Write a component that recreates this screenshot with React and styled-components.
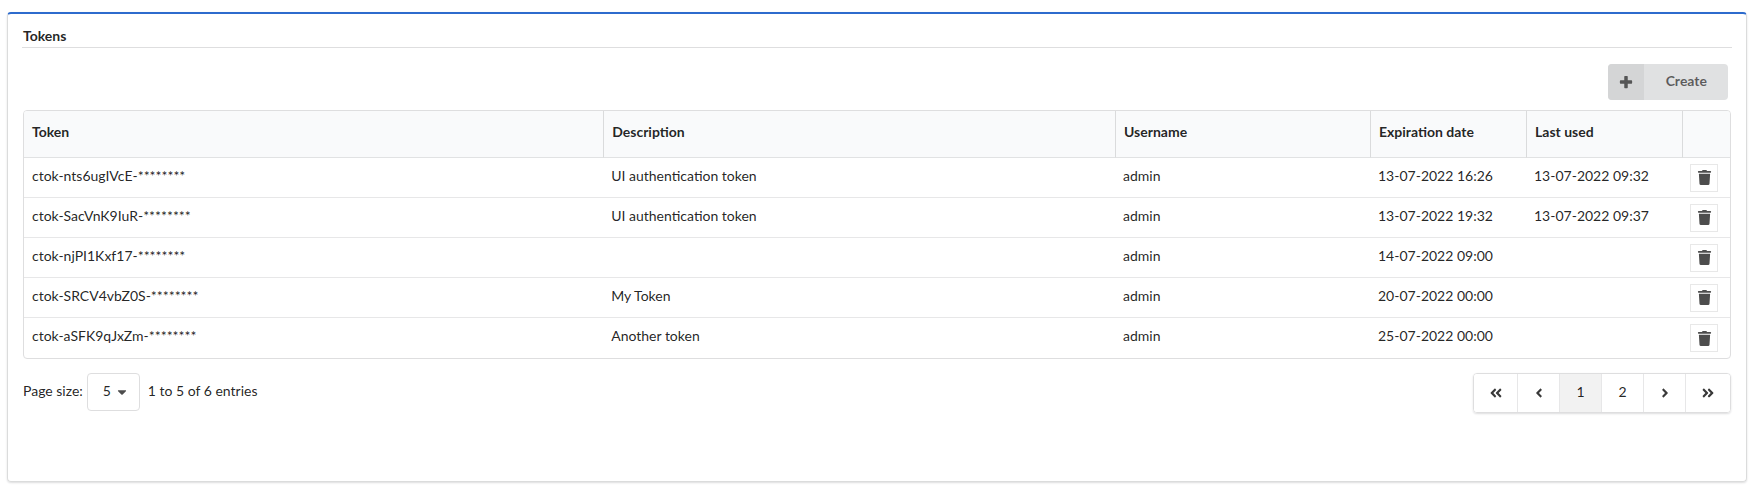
import React, { useState } from "react";
import styled, { createGlobalStyle } from "styled-components";
import {
  FaAngleDoubleLeft,
  FaAngleDoubleRight,
  FaAngleLeft,
  FaAngleRight,
  FaCaretDown,
  FaTrash,
} from "react-icons/fa";

const GlobalStyle = createGlobalStyle`
  *, *::before, *::after { box-sizing: border-box; }
  body {
    margin: 0;
    background: #fff;
    color: rgba(0, 0, 0, 0.87);
    font-family: Lato, "Liberation Sans", sans-serif;
    font-size: 14px;
    line-height: 20px;
  }
  button, select { font: inherit; color: inherit; }
`;

const Panel = styled.main`
  margin: 12px 7px 16px;
  padding: 12px 14px 68px;
  border: 1px solid #dbdcdc;
  border-top: 2px solid #2d6bcd;
  border-radius: 4px;
  box-shadow: 0 1px 2px 0 rgba(34, 36, 38, 0.15);
`;

const Title = styled.h1`
  margin: 0;
  padding: 0 0 1px 1px;
  border-bottom: 1px solid #dededf;
  font-size: 14px;
  line-height: 20px;
  font-weight: 700;
`;

const Content = styled.div`
  padding: 16px 1px 0;
`;

const Toolbar = styled.div`
  display: flex;
  justify-content: flex-end;
  padding: 0 3px 10px;
`;

const CreateButton = styled.button`
  display: flex;
  align-items: center;
  height: 36px;
  padding: 0;
  overflow: hidden;
  border: 0;
  border-radius: 4px;
  background: #e0e1e2;
  color: rgba(0, 0, 0, 0.6);
  font-weight: 700;
  cursor: pointer;
`;

const ButtonIcon = styled.span`
  display: flex;
  align-items: center;
  justify-content: center;
  width: 36px;
  height: 36px;
  background: #d4d5d6;
`;

const ButtonLabel = styled.span`
  padding: 0 21px 2px 22px;
`;

const TokenTable = styled.table`
  width: 100%;
  table-layout: fixed;
  border: 1px solid #dededf;
  border-radius: 4px;
  border-collapse: separate;
  border-spacing: 0;
  overflow: hidden;
`;

const Column = styled.col`
  width: ${({ $width }) => $width};
`;

const HeaderCell = styled.th`
  height: 47px;
  padding: 0 8px 4px;
  border-bottom: 1px solid #e1e2e3;
  background: #f9fafb;
  text-align: left;
  font-weight: 700;

  & + & { border-left: 1px solid #dadbdc; }
`;

const Cell = styled.td`
  height: 40px;
  padding: 0 8px 4px;
  border-bottom: 1px solid #e7e7e8;

  tr:last-child > & { border-bottom: 0; }
`;

const ActionCell = styled(Cell)`
  padding: 0 8px;
`;

const DeleteButton = styled.button`
  display: flex;
  align-items: center;
  justify-content: center;
  width: 28px;
  height: 28px;
  padding: 0;
  border: 1px solid #e8e8e8;
  background: #fff;
  color: #4d4d4d;
  cursor: pointer;
`;

const Footer = styled.footer`
  display: flex;
  align-items: flex-start;
  justify-content: space-between;
  padding-top: 14px;
`;

const PageInfo = styled.div`
  display: flex;
  align-items: center;
`;

const PageSizeLabel = styled.label`
  padding-bottom: 2px;
`;

const SelectBox = styled.span`
  display: grid;
  align-items: center;
  margin: 0 8px 0 4px;

  & > * { grid-area: 1 / 1; }

  & > svg {
    justify-self: end;
    margin-right: 11px;
    pointer-events: none;
    color: #4d4d4d;
  }
`;

const PageSizeSelect = styled.select`
  width: 53px;
  height: 38px;
  padding: 0 16px 2px 15px;
  border: 1px solid #dededf;
  border-radius: 4px;
  background: #fff;
  appearance: none;
`;

const Entries = styled.span`
  padding-bottom: 2px;
`;

const Pagination = styled.nav`
  display: flex;
  overflow: hidden;
  border: 1px solid #dededf;
  border-radius: 4px;
  box-shadow: 0 1px 2px 0 rgba(34, 36, 38, 0.15);
`;

const PageButton = styled.button`
  display: flex;
  align-items: center;
  justify-content: center;
  width: ${({ $wide }) => ($wide ? 44 : 42)}px;
  height: 38px;
  padding: 0 0 2px;
  border: 0;
  border-right: 1px solid #e7e7e8;
  background: ${({ $active }) => ($active ? "#f2f2f2" : "#fff")};
  cursor: pointer;

  &:last-child { border-right: 0; }
`;

const ArrowButton = styled(PageButton)`
  padding: 0;
  color: #3a3a3a;
`;

const PlusIcon = () => (
  <svg width="14" height="14" viewBox="0 0 448 512" fill="currentColor" aria-hidden="true">
    <path d="M448 216v80c0 14-10 24-24 24H288v136c0 14-10 24-24 24h-80c-14 0-24-10-24-24V320H24c-14 0-24-10-24-24v-80c0-14 10-24 24-24h136V56c0-14 10-24 24-24h80c14 0 24 10 24 24v136h136c14 0 24 10 24 24z" />
  </svg>
);

const COLUMNS = [
  { label: "Token", width: "auto" },
  { label: "Description", width: "30%" },
  { label: "Username", width: "255px" },
  { label: "Expiration date", width: "156px" },
  { label: "Last used", width: "156px" },
];

const TOKENS = [
  { token: "ctok-nts6ugIVcE-********", description: "UI authentication token", expires: "13-07-2022 16:26", used: "13-07-2022 09:32" },
  { token: "ctok-SacVnK9IuR-********", description: "UI authentication token", expires: "13-07-2022 19:32", used: "13-07-2022 09:37" },
  { token: "ctok-njPI1Kxf17-********", description: "", expires: "14-07-2022 09:00", used: "" },
  { token: "ctok-SRCV4vbZ0S-********", description: "My Token", expires: "20-07-2022 00:00", used: "" },
  { token: "ctok-aSFK9qJxZm-********", description: "Another token", expires: "25-07-2022 00:00", used: "" },
];

export default function App() {
  const [page, setPage] = useState(1);

  return (
    <>
      <GlobalStyle />
      <Panel>
        <Title>Tokens</Title>
        <Content>
          <Toolbar>
            <CreateButton type="button">
              <ButtonIcon><PlusIcon /></ButtonIcon>
              <ButtonLabel>Create</ButtonLabel>
            </CreateButton>
          </Toolbar>
          <TokenTable>
            <colgroup>
              {COLUMNS.map((column) => (
                <Column key={column.label} $width={column.width} />
              ))}
              <Column $width="48px" />
            </colgroup>
            <thead>
              <tr>
                {COLUMNS.map((column) => (
                  <HeaderCell key={column.label} scope="col">{column.label}</HeaderCell>
                ))}
                <HeaderCell scope="col" aria-label="Actions" />
              </tr>
            </thead>
            <tbody>
              {TOKENS.map((row) => (
                <tr key={row.token}>
                  <Cell>{row.token}</Cell>
                  <Cell>{row.description}</Cell>
                  <Cell>admin</Cell>
                  <Cell>{row.expires}</Cell>
                  <Cell>{row.used}</Cell>
                  <ActionCell>
                    <DeleteButton type="button" aria-label="Delete token">
                      <FaTrash size={15} />
                    </DeleteButton>
                  </ActionCell>
                </tr>
              ))}
            </tbody>
          </TokenTable>
          <Footer>
            <PageInfo>
              <PageSizeLabel htmlFor="page-size">Page size:</PageSizeLabel>
              <SelectBox>
                <PageSizeSelect id="page-size" defaultValue="5">
                  <option>5</option>
                  <option>10</option>
                  <option>25</option>
                </PageSizeSelect>
                <FaCaretDown size={14} />
              </SelectBox>
              <Entries>1 to 5 of 6 entries</Entries>
            </PageInfo>
            <Pagination aria-label="Pages">
              <ArrowButton type="button" $wide aria-label="First page" onClick={() => setPage(1)}>
                <FaAngleDoubleLeft size={14} />
              </ArrowButton>
              <ArrowButton type="button" aria-label="Previous page" onClick={() => setPage(1)}>
                <FaAngleLeft size={14} />
              </ArrowButton>
              {[1, 2].map((number) => (
                <PageButton key={number} type="button" $active={page === number} onClick={() => setPage(number)}>
                  {number}
                </PageButton>
              ))}
              <ArrowButton type="button" aria-label="Next page" onClick={() => setPage(2)}>
                <FaAngleRight size={14} />
              </ArrowButton>
              <ArrowButton type="button" $wide aria-label="Last page" onClick={() => setPage(2)}>
                <FaAngleDoubleRight size={14} />
              </ArrowButton>
            </Pagination>
          </Footer>
        </Content>
      </Panel>
    </>
  );
}
